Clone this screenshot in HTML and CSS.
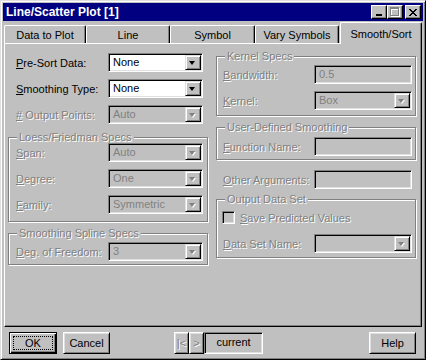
FILE: index.html
```html
<!DOCTYPE html>
<html lang="en">
  <head>
    <meta charset="UTF-8" />
    <meta name="viewport" content="width=device-width, initial-scale=1.0" />
    <title>Line/Scatter Plot [1]</title>
    <link rel="stylesheet" href="styles.css">
  </head>
  <body>
    <div class="window">
      <div class="titlebar">
        <span class="title">Line/Scatter Plot [1]</span>
        <div class="caption-buttons">
          <span class="cap-btn">
            <svg width="8" height="7" viewBox="0 0 8 7"><path d="M1 5h6v2H1z" fill="#000"/></svg>
          </span>
          <span class="cap-btn">
            <svg width="10" height="10" viewBox="0 0 10 10" fill-rule="evenodd">
              <path d="M1 1h9v9H1z M2 3h7v6H2z" fill="#fff"/>
              <path d="M0 0h9v9H0z M1 2h7v6H1z" fill="#808080"/>
            </svg>
          </span>
          <span class="cap-btn close">
            <svg width="8" height="7" viewBox="0 0 8 7">
              <path d="M0 0h2v1H0z M6 0h2v1H6z M1 1h2v1H1z M5 1h2v1H5z M2 2h4v1H2z M3 3h2v1H3z M2 4h4v1H2z M1 5h2v1H1z M5 5h2v1H5z M0 6h2v1H0z M6 6h2v1H6z" fill="#000"/>
            </svg>
          </span>
        </div>
      </div>

      <div class="tabs">
        <div class="tab tab-data">Data to Plot</div>
        <div class="tab tab-line">Line</div>
        <div class="tab tab-symbol">Symbol</div>
        <div class="tab tab-vary">Vary Symbols</div>
        <div class="tab tab-smooth active">Smooth/Sort</div>
      </div>

      <div class="panel">
        <div class="col col-left">
          <div class="row plain first">
            <label><u>P</u>re-Sort Data:</label>
            <div class="combo"><span class="value">None</span><span class="drop"></span></div>
          </div>
          <div class="row plain">
            <label><u>S</u>moothing Type:</label>
            <div class="combo"><span class="value">None</span><span class="drop"></span></div>
          </div>
          <div class="row plain">
            <label class="off"><u>#</u> Output Points:</label>
            <div class="combo disabled"><span class="value">Auto</span><span class="drop"></span></div>
          </div>

          <fieldset class="group loess">
            <legend>Loess/Friedman Specs</legend>
            <div class="row">
              <label class="off"><u>S</u>pan:</label>
              <div class="combo disabled"><span class="value">Auto</span><span class="drop"></span></div>
            </div>
            <div class="row">
              <label class="off"><u>D</u>egree:</label>
              <div class="combo disabled"><span class="value">One</span><span class="drop"></span></div>
            </div>
            <div class="row">
              <label class="off"><u>F</u>amily:</label>
              <div class="combo disabled"><span class="value">Symmetric</span><span class="drop"></span></div>
            </div>
          </fieldset>

          <fieldset class="group spline">
            <legend>Smoothing Spline Specs</legend>
            <div class="row">
              <label class="off"><u>D</u>eg. of Freedom:</label>
              <div class="combo disabled"><span class="value">3</span><span class="drop"></span></div>
            </div>
          </fieldset>
        </div>

        <div class="col col-right">
          <fieldset class="group kernel">
            <legend>Kernel Specs</legend>
            <div class="row">
              <label class="off"><u>B</u>andwidth:</label>
              <div class="field disabled">0.5</div>
            </div>
            <div class="row">
              <label class="off"><u>K</u>ernel:</label>
              <div class="combo disabled"><span class="value">Box</span><span class="drop"></span></div>
            </div>
          </fieldset>

          <fieldset class="group user">
            <legend>User-Defined Smoothing</legend>
            <div class="row">
              <label class="off"><u>F</u>unction Name:</label>
              <div class="field disabled"></div>
            </div>
          </fieldset>

          <div class="row plain other">
            <label class="off"><u>O</u>ther Arguments:</label>
            <div class="field disabled"></div>
          </div>

          <fieldset class="group output">
            <legend>Output Data Set</legend>
            <div class="check-row">
              <span class="checkbox"></span>
              <label class="off"><u>S</u>ave Predicted Values</label>
            </div>
            <div class="row">
              <label class="off"><u>D</u>ata Set Name:</label>
              <div class="combo disabled"><span class="value"></span><span class="drop"></span></div>
            </div>
          </fieldset>
        </div>
      </div>

      <div class="footer">
        <button class="btn default">OK</button>
        <button class="btn cancel">Cancel</button>
        <div class="nav">
          <button class="btn nav-btn">|&lt;</button>
          <button class="btn nav-btn">&gt;</button>
          <div class="current">current</div>
        </div>
        <button class="btn help">Help</button>
      </div>
    </div>
  </body>
</html>
```

FILE: styles.css
```css
body {
  margin: 0;
  font-family: "Liberation Sans", Arial, sans-serif;
  font-size: 11px;
  color: #000;
  background-color: #c0c0c0;
}

.window {
  width: 426px;
  height: 360px;
  box-sizing: border-box;
  padding: 2px;
  border: 1px solid;
  border-color: #dfdfdf #000 #000 #dfdfdf;
  box-shadow: inset 1px 1px #fff, inset -1px -1px #808080;
  background-color: #c0c0c0;
  display: flex;
  flex-direction: column;
}

/* title bar */

.titlebar {
  height: 18px;
  flex-shrink: 0;
  display: flex;
  align-items: center;
  padding: 0 2px 0 3px;
  background-color: #000080;
  color: #fff;
}

.title {
  flex: 1;
  font-size: 12px;
  font-weight: bold;
}

.caption-buttons {
  display: flex;
}

.cap-btn {
  width: 16px;
  height: 14px;
  box-sizing: border-box;
  display: flex;
  align-items: center;
  justify-content: center;
  background-color: #c0c0c0;
  border: 1px solid;
  border-color: #fff #000 #000 #fff;
  box-shadow: inset -1px -1px #808080;
}

.cap-btn.close {
  margin-left: 2px;
}

/* tabs */

.tabs {
  height: 21px;
  flex-shrink: 0;
  margin-top: 1px;
  padding-left: 1px;
  display: flex;
  align-items: flex-end;
  position: relative;
  z-index: 1;
}

.tab {
  height: 18px;
  box-sizing: border-box;
  display: flex;
  align-items: center;
  justify-content: center;
  border: 1px solid #fff;
  border-bottom: none;
  border-right-color: #000;
  border-radius: 2px 2px 0 0;
  box-shadow: inset -1px 0 #808080;
}

.tab-data { width: 82px; }
.tab-line { width: 84px; }
.tab-symbol { width: 85px; }
.tab-vary { width: 84px; }
.tab-smooth { width: 82px; }

.tab.active {
  height: 22px;
  margin-left: 1px;
  margin-bottom: -1px;
  background-color: #c0c0c0;
}

/* panel */

.panel {
  height: 284px;
  flex-shrink: 0;
  box-sizing: border-box;
  margin: 0 1px;
  padding-left: 3px;
  border: 1px solid;
  border-color: #fff #000 #000 #fff;
  box-shadow: inset -1px -1px #808080;
  display: grid;
  grid-template-columns: 200px 200px;
  column-gap: 8px;
  align-items: start;
}

.col {
  display: flex;
  flex-direction: column;
}

.row {
  height: 19px;
  display: flex;
  align-items: center;
}

.row + .row {
  margin-top: 7px;
}

.row label {
  flex: 1;
  white-space: nowrap;
}

.col-left .row {
  padding: 0 4px 0 7px;
}

.col-left .row.plain {
  padding: 0 5px 0 8px;
}

.col-left .row.first {
  margin-top: 9px;
}

.col-right .row {
  padding: 0 3px 0 6px;
}

.col-right .row.plain {
  padding: 0 4px 0 7px;
}

.off {
  color: #808080;
  text-shadow: 1px 1px #fff;
}

/* group boxes */

.group {
  margin: 0;
  padding: 0;
  min-width: 0;
  border: 1px solid #808080;
  box-shadow: inset 1px 1px #fff, 1px 1px #fff;
}

.group legend {
  margin-left: 8px;
  padding: 0 2px;
  line-height: 12px;
  background-color: #c0c0c0;
  color: #808080;
  text-shadow: 1px 1px #fff;
}

.loess {
  margin-top: 7px;
  padding-bottom: 7px;
}

.spline {
  margin-top: 5px;
  padding: 3px 0;
}

.kernel {
  margin-top: 6px;
  padding: 3px 0 5px;
}

.user {
  margin-top: 5px;
  padding: 4px 0 3px;
}

.row.other {
  margin-top: 10px;
}

.output {
  margin-top: 4px;
  padding: 6px 0 4px;
}

.output .row {
  margin-top: 10px;
}

.check-row {
  height: 13px;
  display: flex;
  align-items: center;
  padding-left: 5px;
}

.checkbox {
  width: 13px;
  height: 13px;
  box-sizing: border-box;
  margin-right: 5px;
  border: 1px solid;
  border-color: #808080 #fff #fff #808080;
  box-shadow: inset 1px 1px #000, inset -1px -1px #dfdfdf;
  background-color: #c0c0c0;
}

/* combo boxes and edits */

.combo,
.field {
  height: 19px;
  box-sizing: border-box;
  flex-shrink: 0;
  border: 1px solid;
  border-color: #808080 #fff #fff #808080;
  box-shadow: inset 1px 1px #000, inset -1px -1px #dfdfdf;
  background-color: #fff;
}

.col-left .combo {
  width: 95px;
}

.col-right .combo,
.col-right .field {
  width: 98px;
}

.combo {
  display: flex;
  padding: 1px;
}

.combo .value {
  flex: 1;
  padding-left: 3px;
  line-height: 15px;
}

.field {
  padding-left: 4px;
  line-height: 17px;
}

.combo.disabled,
.field.disabled {
  background-color: #c0c0c0;
  color: #808080;
}

.drop {
  width: 16px;
  box-sizing: border-box;
  background-color: #c0c0c0;
  border: 1px solid;
  border-color: #dfdfdf #000 #000 #dfdfdf;
  box-shadow: inset 1px 1px #fff, inset -1px -1px #808080;
  position: relative;
}

.drop::after {
  content: "";
  position: absolute;
  left: 3px;
  top: 5px;
  border-style: solid;
  border-width: 4px 3.5px 0;
  border-color: #000 transparent transparent;
}

.disabled .drop::after {
  border-top-color: #808080;
  filter: drop-shadow(1px 1px 0 #fff);
}

/* footer buttons */

.footer {
  flex: 1;
  display: flex;
  align-items: flex-start;
  padding: 5px 7px 0 6px;
}

.btn {
  height: 22px;
  box-sizing: border-box;
  margin: 0;
  padding: 0;
  font-family: inherit;
  font-size: 11px;
  color: #000;
  background-color: #c0c0c0;
  border: 1px solid;
  border-color: #fff #000 #000 #fff;
  box-shadow: inset 1px 1px #dfdfdf, inset -1px -1px #808080;
}

.btn.default {
  width: 48px;
  border-color: #000;
  box-shadow: inset 1px 1px #fff, inset -1px -1px #000, inset -2px -2px #808080;
  outline: 1px dotted #000;
  outline-offset: -5px;
}

.btn.cancel {
  width: 47px;
  margin-left: 6px;
}

.nav {
  display: flex;
  margin-left: 64px;
}

.nav-btn {
  width: 15px;
  color: #808080;
  text-shadow: 1px 1px #fff;
}

.current {
  width: 59px;
  height: 22px;
  box-sizing: border-box;
  border: 1px solid;
  border-color: #808080 #fff #fff #808080;
  box-shadow: inset 1px 1px #000, inset -1px -1px #dfdfdf;
  text-align: center;
  line-height: 19px;
}

.btn.help {
  width: 47px;
  margin-left: auto;
}
```
